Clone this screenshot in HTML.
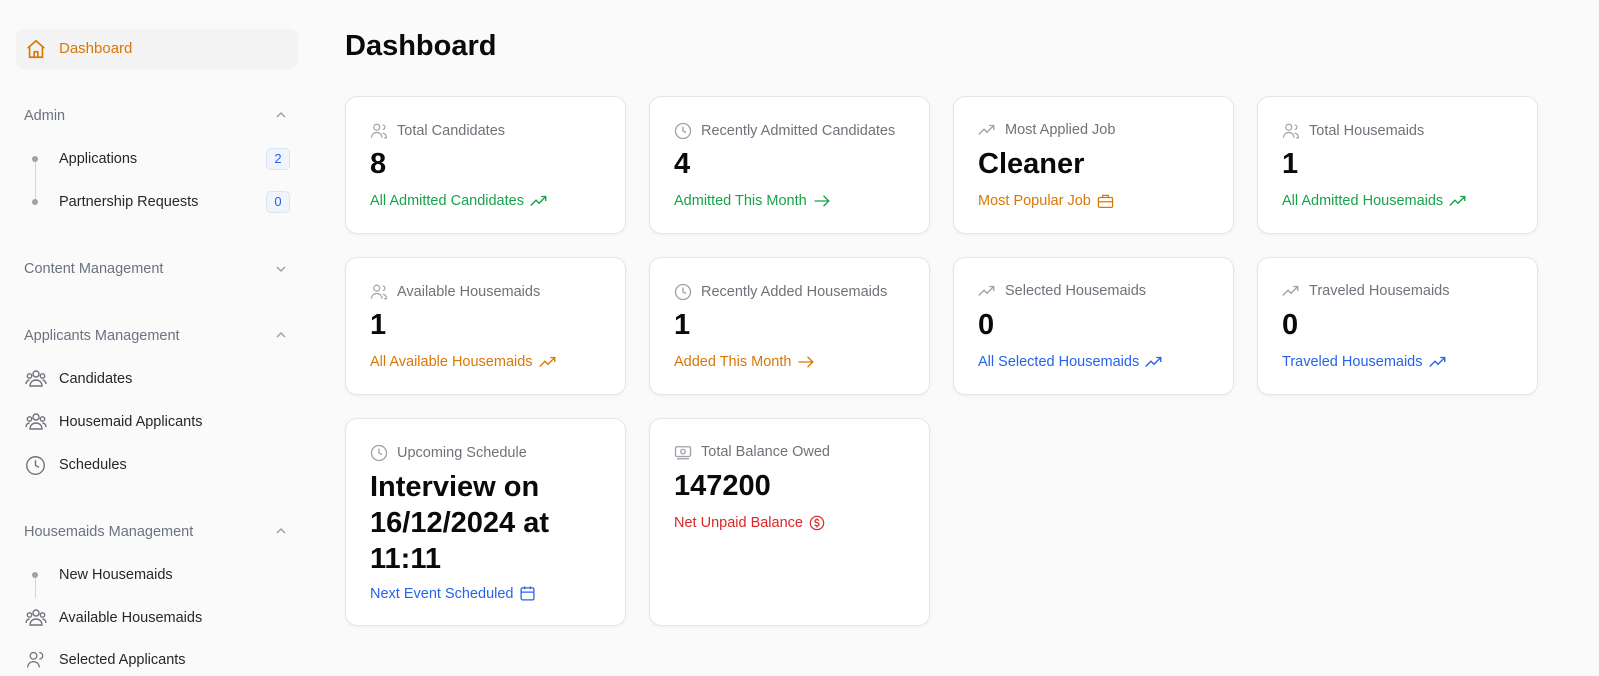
<!DOCTYPE html>
<html><head><meta charset="utf-8"><style>
*{box-sizing:border-box;margin:0;padding:0}
body{width:1599px;height:676px;overflow:hidden;background:#fafafa;font-family:"Liberation Sans",sans-serif;position:relative;color:#111}
.side{position:absolute;left:0;top:0;width:320px;height:676px}
.dash{position:absolute;left:16px;top:29px;width:282px;height:40px;background:#f3f3f4;border-radius:8px;color:#d97706;font-size:15px}
.dash span{position:absolute;left:43px;top:11px}
.dash svg{position:absolute;left:9px;top:9px}
.sec{position:absolute;left:24px;font-size:14.5px;color:#6b7280}
.chev{position:absolute;left:274px}
.item{position:absolute;left:59px;font-size:14.5px;color:#27272a}
.ic{position:absolute;left:25px}
.dot{position:absolute;left:32px;width:6px;height:6px;border-radius:50%;background:#a1a1aa}
.vl{position:absolute;left:34.5px;width:1px;background:#d4d4d8}
.badge{position:absolute;left:266px;width:24px;height:22px;border:1px solid #dbe4f5;background:#eff4fd;border-radius:5px;color:#2563eb;font-size:13px;text-align:center;line-height:20px}
h1{position:absolute;left:345px;top:30px;font-size:29px;font-weight:bold;color:#0a0a0a}
.card{position:absolute;width:281px;background:#fff;border:1px solid #e6e6e8;border-radius:12px;box-shadow:0 1px 3px rgba(0,0,0,.05)}
.t{position:absolute;left:24px;top:25px;font-size:14.5px;color:#71717a;display:flex;align-items:center;gap:9px}
.v{position:absolute;left:24px;top:50px;font-size:29px;font-weight:bold;color:#0a0a0a;line-height:35px}
.l{position:absolute;left:24px;font-size:14.5px;display:flex;align-items:center;gap:6px}
.g{color:#16a34a}.o{color:#d97706}.b{color:#2563eb}.r{color:#dc2626}
</style></head><body>
<div class="side">
 <div class="dash"><svg width="22" height="22" viewBox="0 0 24 24" fill="none" stroke="#d97706" stroke-width="1.8" stroke-linejoin="round"><path d="M3 11L12 3l9 8M5 9.5V21h14V9.5M10 21v-6h4v6"/></svg><span>Dashboard</span></div>
 <div class="sec" style="top:108px">Admin</div>
 <svg class="chev" style="top:108px" width="14" height="14" viewBox="0 0 14 14" fill="none" stroke="#9ca3af" stroke-width="1.5"><path d="M3 9l4-4 4 4"/></svg>
 <div class="vl" style="top:160px;height:42px"></div>
 <div class="dot" style="top:156px"></div><div class="item" style="top:151px">Applications</div><div class="badge" style="top:148px">2</div>
 <div class="dot" style="top:199px"></div><div class="item" style="top:194px">Partnership Requests</div><div class="badge" style="top:191px">0</div>
 <div class="sec" style="top:261px">Content Management</div>
 <svg class="chev" style="top:262px" width="14" height="14" viewBox="0 0 14 14" fill="none" stroke="#9ca3af" stroke-width="1.5"><path d="M3 5l4 4 4-4"/></svg>
 <div class="sec" style="top:328px">Applicants Management</div>
 <svg class="chev" style="top:328px" width="14" height="14" viewBox="0 0 14 14" fill="none" stroke="#9ca3af" stroke-width="1.5"><path d="M3 9l4-4 4 4"/></svg>
 <svg class="ic" style="top:369px" width="22" height="20" viewBox="0 0 22 20" fill="none" stroke="#71717a" stroke-width="1.4"><circle cx="11" cy="5" r="3"/><circle cx="4.5" cy="7" r="2.2"/><circle cx="17.5" cy="7" r="2.2"/><path d="M5 17c0-4 3-6 6-6s6 2 6 6zM1 15c0-2 1.5-4 3.5-4M21 15c0-2-1.5-4-3.5-4"/></svg>
 <div class="item" style="top:371px">Candidates</div>
 <svg class="ic" style="top:412px" width="22" height="20" viewBox="0 0 22 20" fill="none" stroke="#71717a" stroke-width="1.4"><circle cx="11" cy="5" r="3"/><circle cx="4.5" cy="7" r="2.2"/><circle cx="17.5" cy="7" r="2.2"/><path d="M5 17c0-4 3-6 6-6s6 2 6 6zM1 15c0-2 1.5-4 3.5-4M21 15c0-2-1.5-4-3.5-4"/></svg>
 <div class="item" style="top:414px">Housemaid Applicants</div>
 <svg class="ic" style="top:455px" width="21" height="21" viewBox="0 0 24 24" fill="none" stroke="#71717a" stroke-width="1.6"><circle cx="12" cy="12" r="10"/><path d="M12 6v6l4 2"/></svg>
 <div class="item" style="top:457px">Schedules</div>
 <div class="sec" style="top:524px">Housemaids Management</div>
 <svg class="chev" style="top:524px" width="14" height="14" viewBox="0 0 14 14" fill="none" stroke="#9ca3af" stroke-width="1.5"><path d="M3 9l4-4 4 4"/></svg>
 <div class="vl" style="top:576px;height:22px"></div>
 <div class="dot" style="top:572px"></div><div class="item" style="top:567px">New Housemaids</div>
 <svg class="ic" style="top:608px" width="22" height="20" viewBox="0 0 22 20" fill="none" stroke="#71717a" stroke-width="1.4"><circle cx="11" cy="5" r="3"/><circle cx="4.5" cy="7" r="2.2"/><circle cx="17.5" cy="7" r="2.2"/><path d="M5 17c0-4 3-6 6-6s6 2 6 6zM1 15c0-2 1.5-4 3.5-4M21 15c0-2-1.5-4-3.5-4"/></svg>
 <div class="item" style="top:610px">Available Housemaids</div>
 <svg class="ic" style="top:650px" width="22" height="20" viewBox="0 0 24 24" fill="none" stroke="#71717a" stroke-width="1.5"><circle cx="9" cy="7" r="4"/><path d="M2 21c0-4 3-7 7-7s7 3 7 7M16 3a4 4 0 010 8"/></svg>
 <div class="item" style="top:652px">Selected Applicants</div>
</div>
<h1>Dashboard</h1>

<!-- icons defs as inline -->
<div class="card" style="left:345px;top:96px;height:138px">
 <div class="t"><svg width="18" height="18" viewBox="0 0 24 24" fill="none" stroke="#a1a1aa" stroke-width="1.6"><circle cx="9" cy="7" r="4"/><path d="M2 21c0-4 3-7 7-7s7 3 7 7M17 4a3 3 0 010 6M19 21h3c0-3-2-6-5-6"/></svg>Total Candidates</div>
 <div class="v">8</div>
 <div class="l g" style="top:96px">All Admitted Candidates <svg width="18" height="14" viewBox="0 0 24 16" fill="none" stroke="currentColor" stroke-width="1.8"><path d="M1 14l7-7 4 4 9-9M15 2h6v6"/></svg></div>
</div>
<div class="card" style="left:649px;top:96px;height:138px">
 <div class="t"><svg width="18" height="18" viewBox="0 0 24 24" fill="none" stroke="#a1a1aa" stroke-width="1.8"><circle cx="12" cy="12" r="10"/><path d="M12 6v6l4 2"/></svg>Recently Admitted Candidates</div>
 <div class="v">4</div>
 <div class="l g" style="top:96px">Admitted This Month <svg width="18" height="14" viewBox="0 0 24 16" fill="none" stroke="currentColor" stroke-width="1.8"><path d="M2 8h19M14 1l7 7-7 7"/></svg></div>
</div>
<div class="card" style="left:953px;top:96px;height:138px">
 <div class="t"><svg width="18" height="14" viewBox="0 0 24 16" fill="none" stroke="#a1a1aa" stroke-width="1.8"><path d="M1 14l7-7 4 4 9-9M15 2h6v6"/></svg>Most Applied Job</div>
 <div class="v">Cleaner</div>
 <div class="l o" style="top:96px">Most Popular Job <svg width="17" height="16" viewBox="0 0 24 22" fill="none" stroke="currentColor" stroke-width="1.8"><rect x="2" y="6" width="20" height="14" rx="2"/><path d="M8 6V3h8v3M2 12h20"/></svg></div>
</div>
<div class="card" style="left:1257px;top:96px;height:138px">
 <div class="t"><svg width="18" height="18" viewBox="0 0 24 24" fill="none" stroke="#a1a1aa" stroke-width="1.6"><circle cx="9" cy="7" r="4"/><path d="M2 21c0-4 3-7 7-7s7 3 7 7M17 4a3 3 0 010 6M19 21h3c0-3-2-6-5-6"/></svg>Total Housemaids</div>
 <div class="v">1</div>
 <div class="l g" style="top:96px">All Admitted Housemaids <svg width="18" height="14" viewBox="0 0 24 16" fill="none" stroke="currentColor" stroke-width="1.8"><path d="M1 14l7-7 4 4 9-9M15 2h6v6"/></svg></div>
</div>

<div class="card" style="left:345px;top:257px;height:138px">
 <div class="t"><svg width="18" height="18" viewBox="0 0 24 24" fill="none" stroke="#a1a1aa" stroke-width="1.6"><circle cx="9" cy="7" r="4"/><path d="M2 21c0-4 3-7 7-7s7 3 7 7M17 4a3 3 0 010 6M19 21h3c0-3-2-6-5-6"/></svg>Available Housemaids</div>
 <div class="v">1</div>
 <div class="l o" style="top:96px">All Available Housemaids <svg width="18" height="14" viewBox="0 0 24 16" fill="none" stroke="currentColor" stroke-width="1.8"><path d="M1 14l7-7 4 4 9-9M15 2h6v6"/></svg></div>
</div>
<div class="card" style="left:649px;top:257px;height:138px">
 <div class="t"><svg width="18" height="18" viewBox="0 0 24 24" fill="none" stroke="#a1a1aa" stroke-width="1.8"><circle cx="12" cy="12" r="10"/><path d="M12 6v6l4 2"/></svg>Recently Added Housemaids</div>
 <div class="v">1</div>
 <div class="l o" style="top:96px">Added This Month <svg width="18" height="14" viewBox="0 0 24 16" fill="none" stroke="currentColor" stroke-width="1.8"><path d="M2 8h19M14 1l7 7-7 7"/></svg></div>
</div>
<div class="card" style="left:953px;top:257px;height:138px">
 <div class="t"><svg width="18" height="14" viewBox="0 0 24 16" fill="none" stroke="#a1a1aa" stroke-width="1.8"><path d="M1 14l7-7 4 4 9-9M15 2h6v6"/></svg>Selected Housemaids</div>
 <div class="v">0</div>
 <div class="l b" style="top:96px">All Selected Housemaids <svg width="18" height="14" viewBox="0 0 24 16" fill="none" stroke="currentColor" stroke-width="1.8"><path d="M1 14l7-7 4 4 9-9M15 2h6v6"/></svg></div>
</div>
<div class="card" style="left:1257px;top:257px;height:138px">
 <div class="t"><svg width="18" height="14" viewBox="0 0 24 16" fill="none" stroke="#a1a1aa" stroke-width="1.8"><path d="M1 14l7-7 4 4 9-9M15 2h6v6"/></svg>Traveled Housemaids</div>
 <div class="v">0</div>
 <div class="l b" style="top:96px">Traveled Housemaids <svg width="18" height="14" viewBox="0 0 24 16" fill="none" stroke="currentColor" stroke-width="1.8"><path d="M1 14l7-7 4 4 9-9M15 2h6v6"/></svg></div>
</div>

<div class="card" style="left:345px;top:418px;height:208px">
 <div class="t"><svg width="18" height="18" viewBox="0 0 24 24" fill="none" stroke="#a1a1aa" stroke-width="1.8"><circle cx="12" cy="12" r="10"/><path d="M12 6v6l4 2"/></svg>Upcoming Schedule</div>
 <div class="v" style="line-height:36px">Interview on<br>16/12/2024 at<br>11:11</div>
 <div class="l b" style="top:166px">Next Event Scheduled <svg width="17" height="17" viewBox="0 0 24 24" fill="none" stroke="currentColor" stroke-width="1.8"><rect x="3" y="4" width="18" height="17" rx="2"/><path d="M3 10h18M8 2v4M16 2v4"/></svg></div>
</div>
<div class="card" style="left:649px;top:418px;height:208px">
 <div class="t"><svg width="18" height="16" viewBox="0 0 24 20" fill="none" stroke="#a1a1aa" stroke-width="1.8"><rect x="2" y="3" width="20" height="13" rx="2"/><circle cx="12" cy="9.5" r="3"/><path d="M4 19h16"/></svg>Total Balance Owed</div>
 <div class="v">147200</div>
 <div class="l r" style="top:96px">Net Unpaid Balance <svg width="16" height="16" viewBox="0 0 24 24" fill="none" stroke="currentColor" stroke-width="1.8"><circle cx="12" cy="12" r="10"/><path d="M15 8.5c-.5-1-1.7-1.5-3-1.5-1.7 0-3 .8-3 2.3 0 3 6 1.5 6 4.6 0 1.4-1.3 2.3-3 2.3-1.4 0-2.6-.6-3.1-1.7M12 5v2M12 17v2"/></svg></div>
</div>
</body></html>
